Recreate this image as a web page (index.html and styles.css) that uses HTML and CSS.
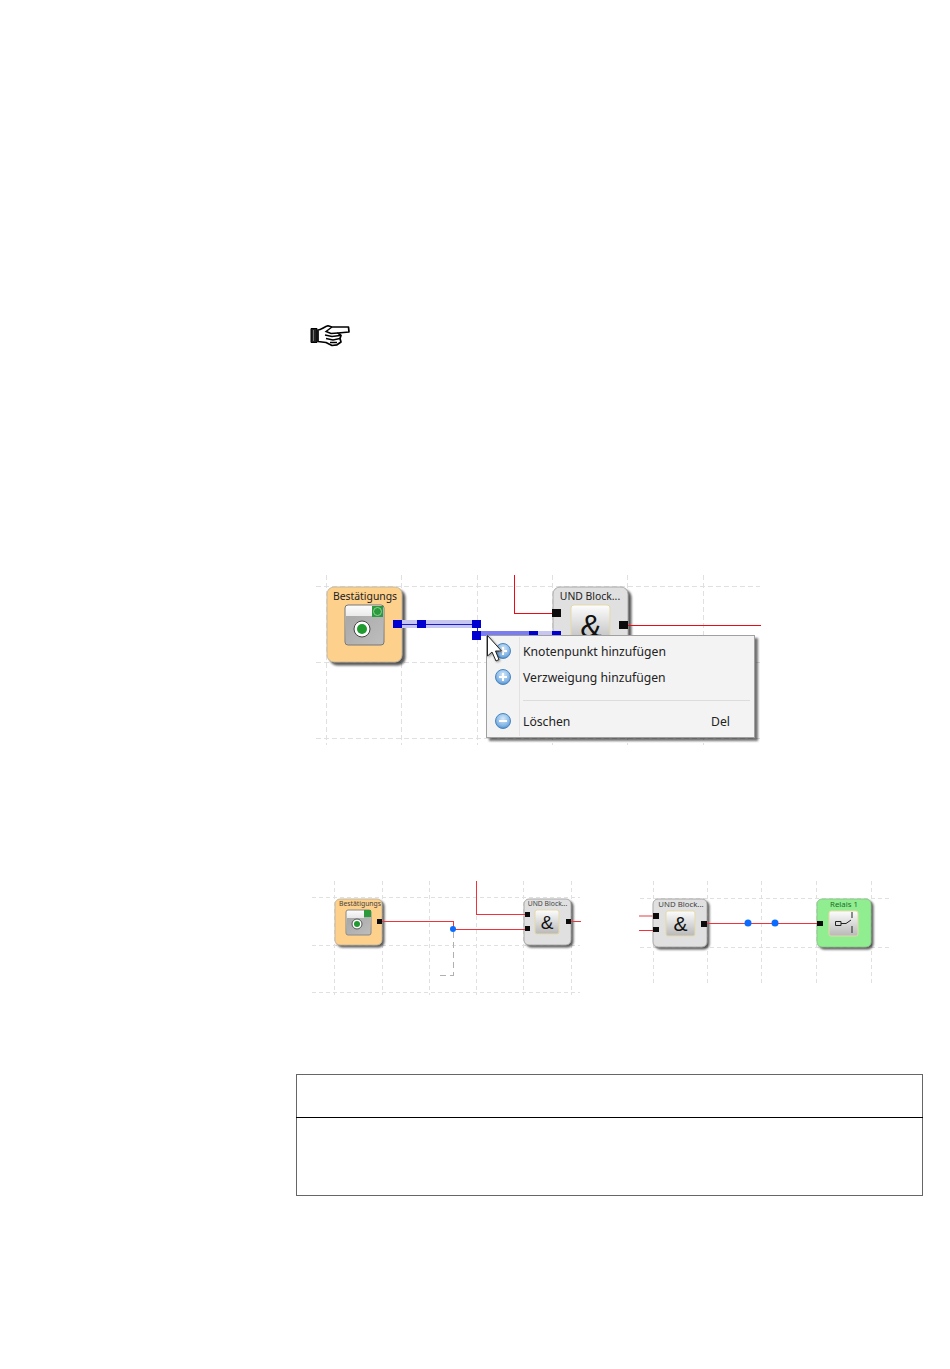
FILE: index.html

```html
<!DOCTYPE html>
<html lang="de">
<head>
  <meta charset="UTF-8" />
  <meta name="viewport" content="width=device-width, initial-scale=1.0"/>
  <title>Verzweigung hinzufügen</title>
  <link rel="stylesheet" href="styles.css">
</head>
<body>
  <main class="page">
    <!-- note hand -->
    <svg class="note-hand" width="42" height="24" viewBox="0 0 42 24">
      <path d="M1 3.5H7V17.5H1Z" fill="#222" stroke="#000"/>
      <path d="M3.5 5V16" stroke="#777" stroke-width="1"/>
      <path d="M8 5C11 5 14 2 18 .8L22 2L38.5 2L39 7L28 8L31 10.5L30 13.5L31 17L27 19.8L22 20.5L16 17.5L8 16.5Z" fill="#fff" stroke="#000" stroke-width="1.7" stroke-linejoin="round"/>
      <path d="M22 2L16 6.5L21 8.5L28 8M15 10L22 11.5L30 10.5M16 13.5L23 15L30 13.5M20 17.5L27 17.5" fill="none" stroke="#000" stroke-width="1.4"/>
    </svg>

    <!-- first diagram, with context menu -->
    <svg class="fig fig-menu" width="460" height="180" viewBox="310 570 460 180">
      <defs>
        <linearGradient id="btn" x1="0" y1="0" x2="0" y2="1">
          <stop offset="0" stop-color="#fdfdfd"/>
          <stop offset="1" stop-color="#b8b8b8"/>
        </linearGradient>
        <linearGradient id="panel" x1="0" y1="0" x2="1" y2="1">
          <stop offset="0" stop-color="#a6a6a6"/>
          <stop offset="1" stop-color="#bdbdbd"/>
        </linearGradient>
        <radialGradient id="round" cx=".5" cy=".35" r=".7">
          <stop offset="0" stop-color="#d8ebfb"/>
          <stop offset=".7" stop-color="#7fb2e3"/>
          <stop offset="1" stop-color="#3f7fc0"/>
        </radialGradient>
      </defs>
      <path class="grid" d="M316 586H760M316 662H760M316 738H760M326 575V745M401 575V745M477 575V745M552 575V745M627 575V745M703 575V745"/>

      <rect class="block orange" x="327" y="587" width="75" height="75" rx="7"/>
      <text class="label" x="365" y="600" text-anchor="middle">Bestätigungs</text>
      <rect x="345" y="605" width="39" height="40" rx="3" fill="url(#btn)" stroke="#777"/>
      <path d="M346 616H372V606H383V644H348Q346 644 346 642Z" fill="url(#panel)"/>
      <rect x="372" y="606" width="11" height="11" fill="#2a9a3c"/>
      <circle cx="377.5" cy="611.5" r="4" fill="none" stroke="#8fd09a"/>
      <circle cx="362" cy="629" r="8" fill="#fff" stroke="#444"/>
      <circle cx="362" cy="629" r="5" fill="#1f9a2e"/>

      <rect class="block grey" x="553" y="587" width="75" height="75" rx="7"/>
      <text class="label" x="590" y="600" text-anchor="middle">UND Block...</text>
      <rect x="571" y="605" width="39" height="40" rx="3" fill="url(#btn)" stroke="#e4d9a8"/>
      <text class="amp amp-big" x="591" y="637" text-anchor="middle">&amp;</text>

      <path class="wire" d="M514 575V613H553M628 625H761"/>
      <rect class="port" x="552" y="609" width="9" height="8"/>
      <rect class="port" x="619" y="621" width="9" height="8"/>

      <!-- selected connection -->
      <rect x="402" y="620" width="70" height="8" fill="#c6c6f0"/>
      <path class="sel-line" d="M402 624H477V635"/>
      <rect x="481" y="631" width="48" height="5" fill="#7c7cf2"/>
      <rect x="538" y="631" width="14" height="5" fill="#c6c6f0"/>
      <rect class="handle" x="393" y="620" width="9" height="8"/>
      <rect class="handle" x="417" y="620" width="9" height="8"/>
      <rect class="handle" x="472" y="620" width="9" height="8"/>
      <rect class="handle" x="472" y="631" width="9" height="9"/>
      <rect class="handle" x="529" y="631" width="9" height="5"/>
      <rect class="handle" x="552" y="631" width="9" height="5"/>

      <!-- context menu -->
      <rect class="menu" x="486.5" y="635.5" width="268" height="102"/>
      <path d="M519.5 637V736" stroke="#e2e2e2"/>
      <path d="M523 700.5H750" stroke="#dcdcdc" stroke-width="1"/>
      <circle class="round" cx="503" cy="651" r="7.5" fill="url(#round)"/>
      <path class="round-sign" d="M503 647V655M499 651H507"/>
      <circle class="round" cx="503" cy="677" r="7.5" fill="url(#round)"/>
      <path class="round-sign" d="M503 673V681M499 677H507"/>
      <circle class="round" cx="503" cy="721" r="7.5" fill="url(#round)"/>
      <path class="round-sign" d="M499 721H507"/>
      <text class="menu-text" x="523" y="656">Knotenpunkt hinzufügen</text>
      <text class="menu-text" x="523" y="682">Verzweigung hinzufügen</text>
      <text class="menu-text" x="523" y="726">Löschen</text>
      <text class="menu-text" x="711" y="726">Del</text>

      <!-- mouse pointer -->
      <path class="pointer" d="M487.5 635.5V656L492 652L496 661L499 659.5L495.5 651H501.5Z"/>
    </svg>

    <div class="fig-row">
      <svg class="fig" width="285" height="125" viewBox="305 875 285 125">
        <path class="grid grid-small" d="M312 897H580M312 945H580M312 992H580M334 881V995M382 881V995M429 881V995M476 881V995M523 881V995M571 881V995"/>
        <rect class="block block-sm orange" x="335" y="899" width="47" height="46" rx="5"/>
        <text class="label-sm" x="339" y="905.5">Bestätigungs</text>
        <rect x="346" y="910" width="25" height="25" rx="2" fill="url(#btn)" stroke="#888"/>
        <path d="M347 918H364V917H370V934H347Z" fill="url(#panel)"/>
        <rect x="364" y="910" width="7" height="7" fill="#2a9a3c"/>
        <circle cx="357" cy="924" r="5" fill="#fff" stroke="#555"/>
        <circle cx="357" cy="924" r="3" fill="#1f9a2e"/>

        <rect class="block block-sm grey" x="524" y="899" width="47" height="46" rx="5"/>
        <text class="label-sm" x="547.5" y="905.5" text-anchor="middle">UND Block...</text>
        <rect x="535" y="910" width="24" height="24" rx="2" fill="url(#btn)" stroke="#e4d9a8"/>
        <text class="amp amp-sm" x="547" y="929" text-anchor="middle">&amp;</text>

        <path class="dashed" d="M453 932V975H436"/>
        <path class="wire wire-bright" d="M382 921H453V929H525M476 881V914H525M571 921H581"/>
        <circle class="dot" cx="453" cy="929" r="3"/>
        <rect class="port" x="377" y="919" width="5" height="5"/>
        <rect class="port" x="525" y="912" width="5" height="5"/>
        <rect class="port" x="525" y="926" width="5" height="5"/>
        <rect class="port" x="566" y="919" width="5" height="5"/>
      </svg>

      <svg class="fig" width="265" height="115" viewBox="630 875 265 115">
        <path class="grid grid-small" d="M640 898H890M640 947H890M653 881V984M707 881V984M761 881V984M816 881V984M871 881V984"/>
        <rect class="block block-sm grey" x="653" y="899" width="54" height="48" rx="5"/>
        <text class="label-sm label-md" x="681" y="906.5" text-anchor="middle">UND Block...</text>
        <rect x="666" y="911" width="29" height="25" rx="2" fill="url(#btn)" stroke="#e4d9a8"/>
        <text class="amp amp-md" x="680.5" y="931" text-anchor="middle">&amp;</text>

        <rect class="block block-sm green" x="817" y="899" width="54" height="48" rx="5"/>
        <text class="label-sm label-md label-green" x="844" y="907" text-anchor="middle">Relais 1</text>
        <rect x="829" y="911" width="29" height="25" rx="2" fill="url(#btn)" stroke="#e4d9a8"/>
        <path class="relay" d="M835.5 921.5H841V925.5H835.5ZM841 923.5H846L851 920M852 912V918M852 926V933"/>

        <path class="wire wire-pale" d="M639 916H653"/>
        <path class="wire wire-bright" d="M639 930H653M707 923H819"/>
        <circle class="dot" cx="748" cy="923" r="3.5"/>
        <circle class="dot" cx="775" cy="923" r="3.5"/>
        <rect class="port" x="653" y="913" width="6" height="6"/>
        <rect class="port" x="653" y="927" width="6" height="5"/>
        <rect class="port" x="701" y="921" width="6" height="6"/>
        <rect class="port" x="817" y="921" width="6" height="5"/>
      </svg>
    </div>

    <table class="note-table">
      <tr><td class="head-cell"></td></tr>
      <tr><td class="body-cell"></td></tr>
    </table>
  </main>
</body>
</html>
```

FILE: styles.css

```css
body {
  margin: 0;
  background: #fff;
}
.page {
  padding: 325px 0 0 296px;
  width: 627px;
}
.note-hand {
  display: block;
  margin-left: 14px;
}
.fig {
  display: block;
}
.fig-menu {
  margin: 221px 0 0 14px;
}
.fig-row {
  display: flex;
  gap: 40px;
  margin: 125px 0 0 9px;
}
.grid {
  fill: none;
  stroke: #e0e0e0;
  stroke-width: 1;
  stroke-dasharray: 5 3;
  shape-rendering: crispEdges;
}
.grid-small {
  stroke-dasharray: 4 3;
}
.block {
  stroke: #c4b9a0;
  stroke-width: 1;
  filter: drop-shadow(3px 3px 1px rgba(0, 0, 0, .65));
}
.block-sm {
  filter: drop-shadow(2px 2px 1px rgba(0, 0, 0, .65));
}
.orange {
  fill: #fdd08c;
}
.grey {
  fill: #e0e0e0;
  stroke: #aaa;
}
.green {
  fill: #90ee90;
  stroke: #8cc68c;
}
.label {
  font: 10.4px "Noto Sans", sans-serif;
  fill: #222;
}
.label-sm {
  font: 6.8px "Noto Sans", sans-serif;
  fill: #444;
}
.label-md {
  font-size: 7.8px;
}
.label-green {
  fill: #1c6b2a;
}
.amp {
  font-family: "Liberation Sans", sans-serif;
  fill: #111;
}
.amp-big {
  font-size: 32px;
}
.amp-sm {
  font-size: 19px;
}
.amp-md {
  font-size: 21px;
}
.wire {
  fill: none;
  stroke: #ee0a14;
  stroke-width: 1;
  shape-rendering: crispEdges;
}
.wire-bright {
  stroke: #f0323c;
}
.wire-pale {
  stroke: #f0a0a4;
  stroke-width: 2;
}
.sel-line {
  fill: none;
  stroke: #1a1ac8;
  stroke-width: 1;
  shape-rendering: crispEdges;
}
.dashed {
  fill: none;
  stroke: #b0b0b0;
  stroke-width: 1;
  stroke-dasharray: 6 4;
  shape-rendering: crispEdges;
}
.dot {
  fill: #0a6cff;
}
.port {
  fill: #0c0c0c;
}
.handle {
  fill: #0000d0;
}
.relay {
  fill: none;
  stroke: #222;
  stroke-width: 1;
}
.menu {
  fill: #f3f3f3;
  stroke: #a0a0a0;
  stroke-width: 1;
  filter: drop-shadow(3px 3px 1px rgba(0, 0, 0, .55));
}
.menu-text {
  font: 12.2px "Noto Sans", sans-serif;
  fill: #222;
}
.round {
  stroke: #4a86c0;
  stroke-width: 1;
}
.round-sign {
  fill: none;
  stroke: #fff;
  stroke-width: 2;
}
.pointer {
  fill: #fff;
  stroke: #222;
  stroke-width: 1;
  filter: drop-shadow(1px 1px 1px rgba(0, 0, 0, .4));
}
.note-table {
  width: 627px;
  margin-top: 74px;
  border-collapse: collapse;
  border: 1px solid #666;
}
.note-table td {
  padding: 0;
}
.head-cell {
  height: 42px;
  border-bottom: 1px solid #000;
}
.body-cell {
  height: 77px;
}
```
